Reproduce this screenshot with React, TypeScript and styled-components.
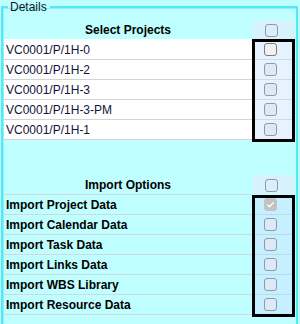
import React from "react";
import styled, { createGlobalStyle, css } from "styled-components";

const GlobalStyle = createGlobalStyle`
  html, body {
    margin: 0;
    padding: 0;
    background: #c0ffff;
    font-family: "Liberation Sans", Arial, sans-serif;
  }
`;

const Fieldset = styled.fieldset`
  margin: 0 2px 0 1px;
  padding: 6px 1px 0 1px;
  border: 2px solid #56e8f6;
  border-bottom: none;
  box-shadow: inset 1px 1px 0 #8af2fa;
  min-height: 330px;
  box-sizing: border-box;
`;

const Legend = styled.legend`
  margin-left: 4px;
  padding: 0 3px 0 2px;
  font-size: 12px;
  line-height: 14px;
  color: #0a1428;
`;

const Section = styled.section<{ $gap?: number }>`
  display: grid;
  grid-template-columns: 1fr 43px;
  margin-top: ${(p) => p.$gap ?? 0}px;
`;

const HeaderLabel = styled.div<{ $line?: boolean }>`
  height: 19px;
  display: flex;
  align-items: center;
  justify-content: center;
  font-size: 12px;
  font-weight: bold;
  color: #000;
  ${(p) =>
    p.$line &&
    css`
      border-bottom: 1px solid #d2d8dc;
    `}
`;

const HeaderCheckCell = styled.div<{ $line?: boolean }>`
  height: 19px;
  margin: 0 1px;
  background: #d7f2fa;
  display: flex;
  align-items: center;
  padding-left: 12px;
  padding-top: 1px;
  box-sizing: border-box;
  ${(p) =>
    p.$line &&
    css`
      margin-bottom: 1px;
    `}
`;

const Column = styled.div``;

const CheckColumn = styled.div<{ $tone: "select" | "import" }>`
  position: relative;
  background: ${(p) => (p.$tone === "select" ? "#e6f2fd" : "#c6f0ff")};
  &::after {
    content: "";
    position: absolute;
    left: 0;
    right: 0;
    top: 0;
    bottom: -2px;
    border: 3px solid #000;
    pointer-events: none;
  }
`;

const LabelCell = styled.div<{ $kind: "project" | "option"; $first?: boolean }>`
  height: 20px;
  box-sizing: border-box;
  display: flex;
  align-items: center;
  padding-left: 2px;
  font-size: 12px;
  white-space: nowrap;
  ${(p) =>
    p.$kind === "project"
      ? css`
          background: #fff;
          color: #121238;
          border-bottom: 1px solid #d3d3d3;
        `
      : css`
          color: #000;
          font-weight: bold;
          border-bottom: 1px solid #d2d8dc;
        `}
  ${(p) =>
    p.$first &&
    css`
      height: 21px;
      border-top: 1px solid #fff;
    `}
`;

const CheckCell = styled.div<{ $tone: "select" | "import"; $first?: boolean }>`
  height: 20px;
  box-sizing: border-box;
  display: flex;
  align-items: center;
  padding-left: 12px;
  border-bottom: 1px solid ${(p) => (p.$tone === "select" ? "#cddbe8" : "#b8dcec")};
  ${(p) =>
    p.$first &&
    css`
      height: 21px;
      border-top: 1px solid transparent;
    `}
`;

type BoxState = "plain" | "light" | "checkedDisabled" | "header";

const Box = styled.span<{ $state: BoxState }>`
  display: inline-flex;
  align-items: center;
  justify-content: center;
  width: 13px;
  height: 13px;
  box-sizing: border-box;
  border-radius: 3px;
  border: 1px solid #8c9bab;
  background: #dde9f6;
  ${(p) =>
    p.$state === "light" &&
    css`
      background: #f1f1f1;
      border-color: #7c7c7c;
    `}
  ${(p) =>
    p.$state === "header" &&
    css`
      background: #dcecf8;
    `}
  ${(p) =>
    p.$state === "checkedDisabled" &&
    css`
      background: #c3c3c3;
      border-color: #c3c3c3;
    `}
`;

const Checkbox: React.FC<{ state: BoxState }> = ({ state }) => (
  <Box $state={state} role="checkbox" aria-checked={state === "checkedDisabled"}>
    {state === "checkedDisabled" && (
      <svg width="9" height="9" viewBox="0 0 9 9">
        <path d="M1.5 4.8 L3.6 6.8 L7.6 2.4" fill="none" stroke="#fff" strokeWidth="1.3" />
      </svg>
    )}
  </Box>
);

const projects = [
  "VC0001/P/1H-0",
  "VC0001/P/1H-2",
  "VC0001/P/1H-3",
  "VC0001/P/1H-3-PM",
  "VC0001/P/1H-1",
];

const options = [
  "Import Project Data",
  "Import Calendar Data",
  "Import Task Data",
  "Import Links Data",
  "Import WBS Library",
  "Import Resource Data",
];

export default function App() {
  return (
    <>
      <GlobalStyle />
      <Fieldset>
        <Legend>Details</Legend>
        <Section>
          <HeaderLabel>Select Projects</HeaderLabel>
          <HeaderCheckCell>
            <Checkbox state="header" />
          </HeaderCheckCell>
          <Column>
            {projects.map((p, i) => (
              <LabelCell key={p} $kind="project" $first={i === 0}>
                {p}
              </LabelCell>
            ))}
          </Column>
          <CheckColumn $tone="select">
            {projects.map((p, i) => (
              <CheckCell key={p} $tone="select" $first={i === 0}>
                <Checkbox state={i === 0 ? "light" : "plain"} />
              </CheckCell>
            ))}
          </CheckColumn>
        </Section>
        <Section $gap={35}>
          <HeaderLabel $line>Import Options</HeaderLabel>
          <HeaderCheckCell $line>
            <Checkbox state="header" />
          </HeaderCheckCell>
          <Column>
            {options.map((o) => (
              <LabelCell key={o} $kind="option">
                {o}
              </LabelCell>
            ))}
          </Column>
          <CheckColumn $tone="import">
            {options.map((o, i) => (
              <CheckCell key={o} $tone="import">
                <Checkbox state={i === 0 ? "checkedDisabled" : "plain"} />
              </CheckCell>
            ))}
          </CheckColumn>
        </Section>
      </Fieldset>
    </>
  );
}
